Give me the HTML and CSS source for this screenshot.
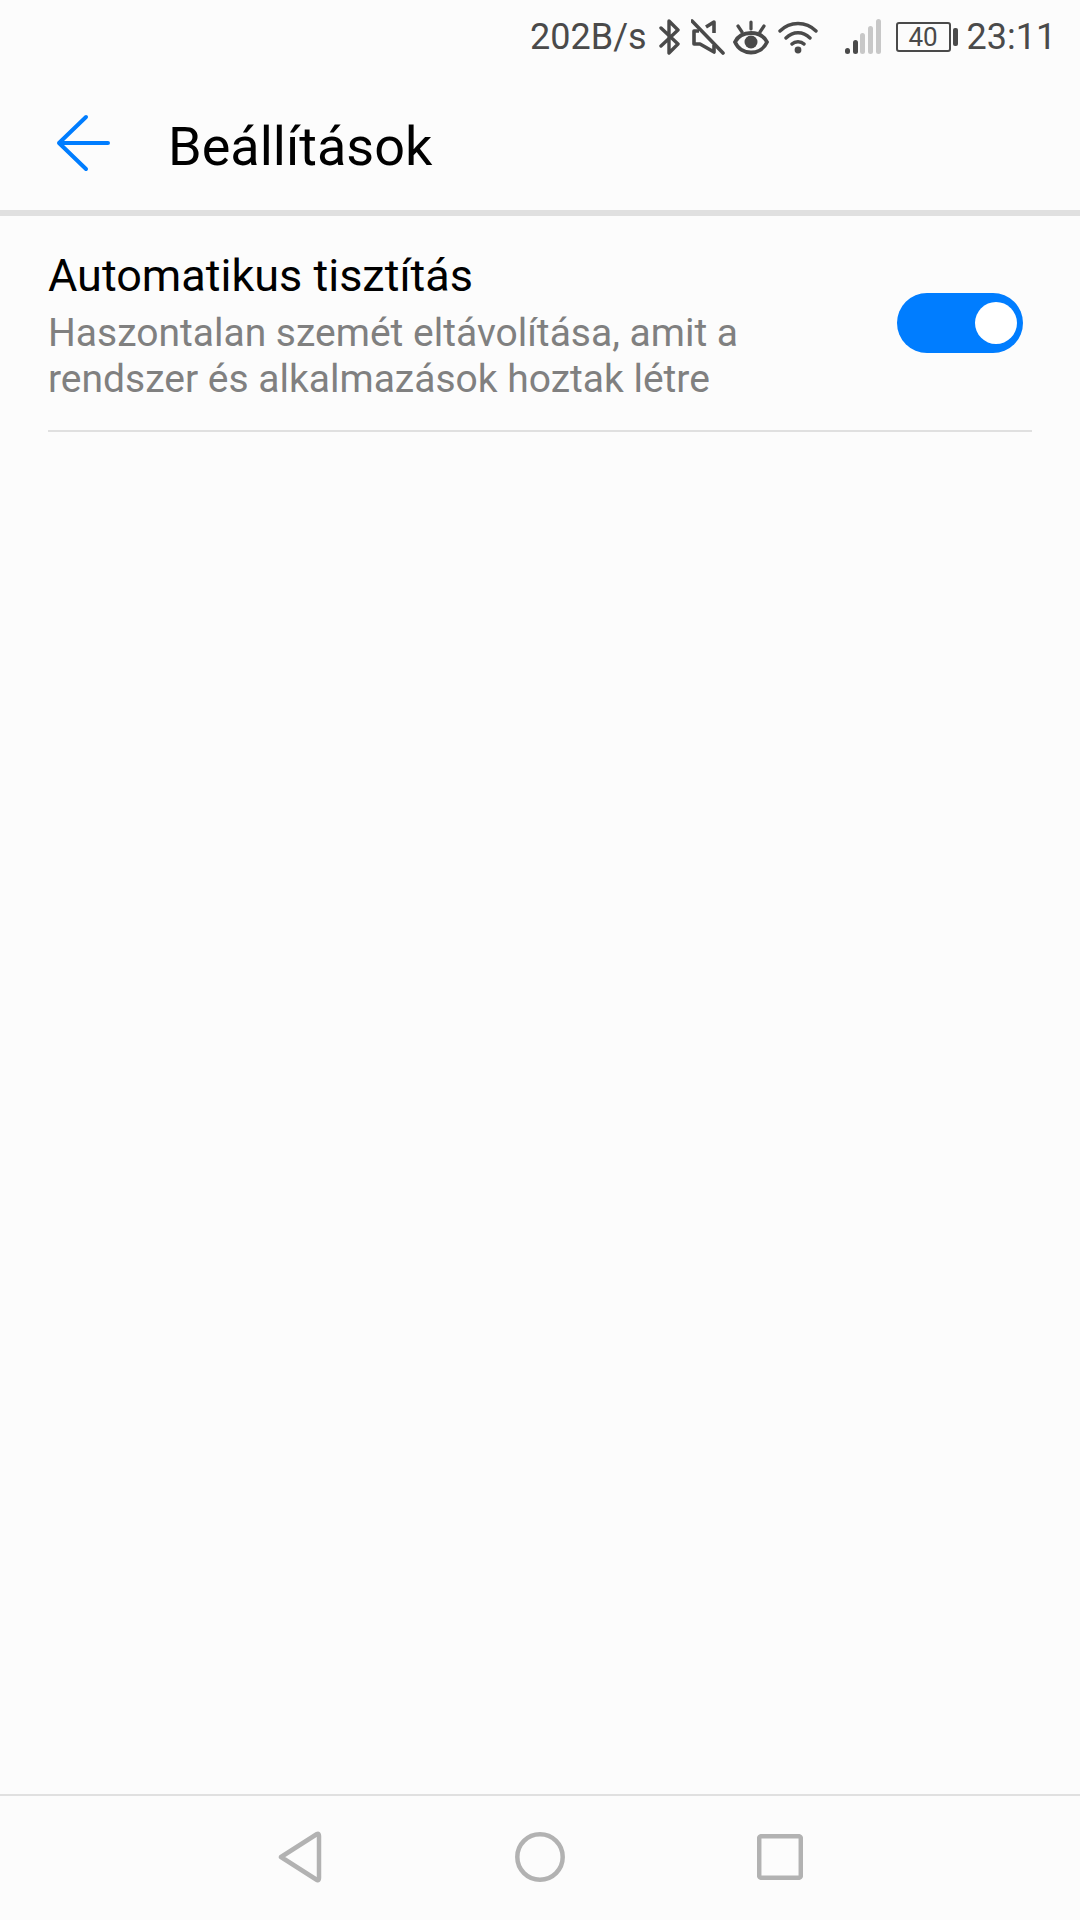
FILE: index.html
```html
<!DOCTYPE html>
<html lang="hu">
<head>
    <meta charset="UTF-8">
    <meta name="viewport" content="width=device-width, initial-scale=1.0">
    <title>Beállítások</title>
    <link rel="stylesheet" href="styles.css">
</head>
<body>
    <div class="statusbar">
        <span class="speed">202B/s</span>
        <svg class="ic-bt" width="22" height="36" viewBox="0 0 22 36"><path d="M2 9 L19 25 L10 34 V2 L19 11 L2 27" fill="none" stroke="#4a4a4a" stroke-width="3.4" stroke-linejoin="round" stroke-linecap="round"/></svg>
        <svg class="ic-mute" width="34" height="36" viewBox="0 0 34 36"><path d="M8 12 H3 V25 H9 L23 33 V26 M23 14 V3 L15 8" fill="none" stroke="#4a4a4a" stroke-width="3.6" stroke-linejoin="round"/><path d="M1 2 L32 34" stroke="#4a4a4a" stroke-width="3.6" stroke-linecap="round"/></svg>
        <svg class="ic-eye" width="36" height="36" viewBox="0 0 36 36"><path d="M2 23 C8 11 28 11 34 23 C28 37 8 37 2 23 Z" fill="none" stroke="#4a4a4a" stroke-width="3.8"/><circle cx="18" cy="23" r="6.5" fill="#4a4a4a"/><path d="M18 3 V10 M5 7 L9 13 M31 7 L27 13" stroke="#4a4a4a" stroke-width="3.2" stroke-linecap="round"/></svg>
        <svg class="ic-wifi" width="40" height="36" viewBox="0 0 40 36"><path d="M2 12 C12 2 28 2 38 12 M8 19 C15 12 25 12 32 19 M14 25 C17 22 23 22 26 25" fill="none" stroke="#4a4a4a" stroke-width="3.4" stroke-linecap="round"/><circle cx="20" cy="31" r="3.4" fill="#4a4a4a"/></svg>
        <svg class="ic-signal" width="36" height="36" viewBox="0 0 36 36"><rect x="0" y="29" width="5" height="6" rx="2.5" fill="#4a4a4a"/><rect x="8" y="21" width="5" height="14" rx="2.5" fill="#4a4a4a"/><rect x="15" y="14" width="5" height="21" rx="2.5" fill="#c8c8c8"/><rect x="23" y="7" width="5" height="28" rx="2.5" fill="#c8c8c8"/><rect x="31" y="0" width="5" height="35" rx="2.5" fill="#c8c8c8"/></svg>
        <div class="battery">
            <div class="battery-box">40</div>
            <div class="battery-nub"></div>
        </div>
        <span class="clock">23:11</span>
    </div>

    <div class="toolbar">
        <svg class="back" width="54" height="58" viewBox="0 0 54 58"><path d="M30 3 L3 29 L30 55 M3 29 H52" fill="none" stroke="#007dff" stroke-width="4" stroke-linecap="round" stroke-linejoin="round"/></svg>
        <div class="toolbar-title">Beállítások</div>
    </div>

    <div class="content">
        <div class="setting">
            <div class="setting-text">
                <div class="setting-title">Automatikus tisztítás</div>
                <div class="setting-desc">Haszontalan szemét eltávolítása, amit a<br>rendszer és alkalmazások hoztak létre</div>
            </div>
            <div class="switch"><div class="knob"></div></div>
        </div>
    </div>

    <div class="navbar">
        <svg class="nav-back" width="44" height="52" viewBox="0 0 44 52"><path d="M3 26 L39 3 Q41 2 41 5 V47 Q41 50 39 49 Z" fill="none" stroke="#b2b2b2" stroke-width="4.5" stroke-linejoin="round"/></svg>
        <svg width="50" height="50" viewBox="0 0 50 50"><circle cx="25" cy="25" r="22.7" fill="none" stroke="#b2b2b2" stroke-width="4.5"/></svg>
        <svg width="46" height="46" viewBox="0 0 46 46"><rect x="2.2" y="2.2" width="41.6" height="41.6" rx="2" fill="none" stroke="#b2b2b2" stroke-width="4.5"/></svg>
    </div>
</body>
</html>
```

FILE: styles.css
```css
body {
    font-family: Roboto, sans-serif;
    margin: 0;
    padding: 0;
    display: flex;
    flex-direction: column;
    height: 1920px;
    background-color: #fcfcfc;
    overflow: hidden;
}

.statusbar {
    display: flex;
    align-items: center;
    box-sizing: border-box;
    height: 72px;
    padding: 2px 0 0 530px;
    color: #4a4a4a;
    font-size: 36px;
}

.speed {
    margin-right: 12px;
}

.ic-bt {
    margin-right: 10px;
}

.ic-mute {
    margin-right: 8px;
}

.ic-eye {
    margin-right: 9px;
}

.ic-wifi {
    margin-right: 27px;
}

.ic-signal {
    margin-right: 15px;
}

.battery {
    display: flex;
    align-items: center;
    margin-right: 9px;
}

.battery-box {
    box-sizing: border-box;
    width: 55px;
    height: 30px;
    border: 2px solid #4a4a4a;
    border-radius: 3px;
    font-size: 26px;
    line-height: 26px;
    text-align: center;
}

.battery-nub {
    width: 5px;
    height: 18px;
    margin-left: 2px;
    background-color: #4a4a4a;
    border-radius: 2px;
}

.toolbar {
    display: flex;
    align-items: center;
    height: 138px;
    padding-left: 56px;
    border-bottom: 6px solid #e0e0e0;
}

.back {
    margin-right: 58px;
    margin-top: 3px;
}

.toolbar-title {
    font-size: 54px;
    color: #000;
    margin-top: 10px;
}

.content {
    flex: 1;
    padding: 0 48px;
}

.setting {
    display: flex;
    align-items: center;
    justify-content: space-between;
    height: 216px;
    box-sizing: border-box;
    padding-right: 9px;
    border-bottom: 2px solid #e0e0e0;
}

.setting-text {
    padding-top: 5px;
}

.setting-title {
    font-size: 45px;
    line-height: 52px;
    margin-bottom: 8px;
    color: #000;
}

.setting-desc {
    font-size: 39px;
    line-height: 46px;
    color: #808080;
}

.switch {
    display: flex;
    align-items: center;
    justify-content: flex-end;
    box-sizing: border-box;
    width: 126px;
    height: 60px;
    padding-right: 6px;
    background-color: #007dff;
    border-radius: 30px;
}

.knob {
    width: 42px;
    height: 42px;
    background-color: #fff;
    border-radius: 50%;
}

.navbar {
    display: flex;
    align-items: center;
    justify-content: center;
    gap: 192px;
    box-sizing: border-box;
    height: 126px;
    padding: 0 0 3px 0;
    border-top: 2px solid #e0e0e0;
}

.nav-back {
    margin-right: 1px;
}
```
